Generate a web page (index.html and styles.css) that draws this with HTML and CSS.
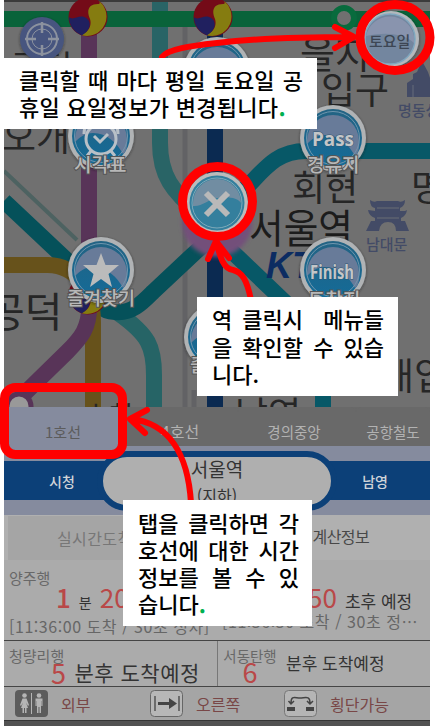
FILE: index.html
```html
<!DOCTYPE html>
<html lang="ko">
<head>
<meta charset="utf-8">
<title>지하철 노선 안내</title>
<link rel="stylesheet" href="styles.css">
</head>
<body>
<div class="screen">
  <svg class="map" viewBox="4 0 426 407" width="426" height="407">
    <defs>
      <linearGradient id="blue" x1="0" y1="0" x2="0" y2="1"><stop offset="0" stop-color="#236383"/><stop offset="1" stop-color="#146b98"/></linearGradient>
      <filter id="soft" x="-30%" y="-30%" width="160%" height="160%"><feDropShadow dx="0" dy="1" stdDeviation="1.5" flood-color="#222" flood-opacity=".6"/></filter>
      <filter id="glow" x="-40%" y="-40%" width="180%" height="180%"><feGaussianBlur stdDeviation="2"/></filter>
      <g id="taegeuk">
        <circle r="19.500" fill="#740b18"/>
        <path d="M9 -17.300A19.500 19.500 0 0 1 -7 18C1 15 4 8 2 2C-2 -7 1 -13 10 -13C12 -13 13 -15 9 -17.300Z" fill="#857c10"/>
        <path d="M-19 0C-15 4 -10 -2 -4 0C3 2 5 12 -6 18.300A19.500 19.500 0 0 1 -19 0Z" fill="#20205f"/>
      </g>
      <g id="button">
        <circle r="33" fill="#b0b3b5" filter="url(#soft)"/>
        <circle r="29" fill="url(#blue)"/>
        <path d="M-26 3A26 26 0 0 1 26 3C27 9 25 16 22 18C16 7 6-3-8-3C-16-3-21 1-26 6Z" fill="#687b99"/>
        <circle r="26.5" fill="none" stroke="#7096ae" stroke-width="1"/>
      </g>
    </defs>
    <rect x="4" width="426" height="407" fill="#707070"/>
    <g fill="none">
      <path d="M185 20V407M194 390V407" stroke="#626265" stroke-width="5"/>
      <path d="M4 171L77 240" stroke="#4d6261" stroke-width="4"/>
      <path d="M160 0V143C160 175 172 192 200 214" stroke="#296466" stroke-width="16"/>
      <path d="M118 313C149 335 154 347 154 375V407" stroke="#266466" stroke-width="16"/>
      <path d="M4 201L72 265C93 287 91 311 115 312C132 314 143 302 153 292L202 246" stroke="#05515a" stroke-width="16"/>
      <path d="M4 265H48C78 266 93 291 93 322V407" stroke="#67521b" stroke-width="16"/>
      <path d="M89 20V300C91 328 80 339 67 352L24 394" stroke="#583458" stroke-width="16"/>
      <path d="M430 151H306C278 151 266 167 248 186L222 210M222 242L289 306M323 390V407" stroke="#075867" stroke-width="16"/>
      <path d="M215 20V407" stroke="#0b2a51" stroke-width="16"/>
      <path d="M4 19H430" stroke="#09633a" stroke-width="16"/>
      <circle cx="344" cy="18" r="10" stroke="#086b3d" stroke-width="6" fill="#707070"/>
      <path d="M4 1H430" stroke="#3b3b3b" stroke-width="2"/>
    </g>
    <circle cx="19" cy="406" r="12" stroke="#583458" stroke-width="5" fill="#999"/>
    <circle cx="217" cy="222" r="35" fill="#73507a" filter="url(#glow)"/>
    <use href="#taegeuk" x="88" y="17"/><use href="#taegeuk" x="213" y="17"/><use href="#taegeuk" x="88" y="295"/>

    <g class="place">
      <text x="10" y="80" font-size="34">공덕</text>
      <text x="300" y="68" font-size="38">을지</text>
      <text x="321" y="104" font-size="37">입구</text>
      <text x="292" y="201" font-size="36">회현</text>
      <text x="411" y="201" font-size="36">명</text>
      <text class="major" x="249" y="243" font-size="40" textLength="104" lengthAdjust="spacingAndGlyphs">서울역</text>
      <text x="-13" y="327" font-size="41">공덕</text>
      <text x="-32" y="151" font-size="37">애오개</text>
      <text x="380" y="390" font-size="37">대입</text>
      <text x="235" y="428" font-size="36">남영</text>
      <text x="83" y="427" font-size="28">효창</text>
    </g>
    <g fill="#434b66" class="landmark">
      <path d="M407 97V83L413 79V74L417 72L422 61L428 72L430 78V97Z"/>
      <path d="M413 85V97" stroke="#666c7b"/>
      <text x="398" y="116" font-size="15">명동성</text>
      <path d="M370 200Q374 203 377 201H398Q401 203 405 200Q405 206 400 208V211H405L407 210Q406 216 401 218V221H405L409 231H396Q396 222 388 222Q380 222 379 231H366L371 221H375V218Q369 216 368 210L375 211V208Q370 207 370 200Z"/>
      <path d="M377 208H399M377 218H399" stroke="#6b6e75"/>
      <text x="366" y="250" font-size="15">남대문</text>
    </g>
    <text class="ktx" x="266" y="278" font-size="36">KTX</text>

    <circle cx="42" cy="39" r="22" fill="#46557f" filter="url(#soft)"/>
    <g fill="none" stroke="#8c929f" stroke-width="2"><circle cx="42" cy="39" r="15"/><circle cx="42" cy="39" r="10" stroke-width="1"/><path d="M42 22V33M42 45V56M25 39H36M48 39H59" stroke-width="2.5"/></g>

    <use href="#button" x="217" y="70"/><use href="#button" x="217" y="337"/>
    <use href="#button" x="101" y="136"/><use href="#button" x="333" y="138"/>
    <use href="#button" x="101" y="270"/><use href="#button" x="333" y="270"/>
    <g fill="none" stroke="#b8c0c7" stroke-width="3"><circle cx="101" cy="139" r="15"/><path d="M94 136L100 142L108 134M84 134Q84 123 94 122M108 122Q118 123 118 134M91 151L87 156M111 151L115 156"/></g>
    <path d="M101 253L105.5 265H119L108.500 274L112 287L101 279L90 287L93.500 274L83 265H96.500Z" fill="#bbb"/>
    <g class="button-word"><text x="312" y="146" font-size="20" textLength="42" lengthAdjust="spacingAndGlyphs">Pass</text><text x="310" y="279" font-size="19" textLength="44" lengthAdjust="spacingAndGlyphs">Finish</text></g>
    <g class="caption">
      <text x="74" y="172" font-size="19">시각표</text>
      <text x="307" y="172" font-size="19">경유지</text>
      <text x="67" y="305" font-size="18.500">즐겨찾기</text>
      <text x="308" y="307" font-size="19">도착지</text>
      <text x="190" y="372" font-size="19">출발지</text>
    </g>
    <circle cx="217" cy="203" r="31" fill="#bbb"/><circle cx="217" cy="203" r="27.500" fill="#347f9d"/>
    <path d="M193 203A24 24 0 0 1 241 203C238 198 228 196 218 198C208 199 202 207 193 206Z" fill="#718da2"/>
    <circle cx="217" cy="203" r="25" fill="none" stroke="#7eaaba"/>
    <path d="M206 193L228 215M228 193L206 215" stroke="#b9b9b9" stroke-width="6"/>
    <circle cx="391" cy="39" r="28" fill="#b4b8bd" filter="url(#soft)"/><circle cx="390" cy="39" r="25" fill="#73869f"/>
    <path d="M366 36A24.500 24.500 0 0 1 414 36V43C406 35 390 31 366 36Z" fill="#8994ae"/><circle cx="390" cy="39" r="25" fill="none" stroke="#7fa7bf" stroke-width="1.500"/>
    <text class="weekday" x="369" y="47" font-size="15">토요일</text>
  </svg>

  <nav class="lines"><span class="line active">1호선</span><span class="line">4호선</span><span class="line">경의중앙</span><span class="line">공항철도</span></nav>
  <header class="station">
    <div class="track"><span>시청</span><span>남영</span></div>
    <div class="current"><b>서울역</b><span>(지하)</span></div>
  </header>
  <nav class="modes"><span class="mode">실시간도착</span><span class="mode selected">계산정보</span></nav>
  <section class="arrivals">
    <article class="arrival">
      <span class="bound">양주행</span>
      <p class="eta"><em>1</em><small>분</small><em>20</em></p>
      <p class="detail">[11:36:00 도착 / 30초 정차]</p>
    </article>
    <article class="arrival right">
      <p class="eta"><em>50</em><span>초후 예정</span></p>
      <p class="detail">[11:36:30 도착 / 30초 정⋯</p>
    </article>
  </section>
  <section class="next">
    <article class="following"><span class="bound">청량리행</span><p><em>5</em><span>분후 도착예정</span></p></article>
    <article class="following second"><div><span class="bound">서동탄행</span><em>6</em></div><span class="due">분후 도착예정</span></article>
  </section>
  <footer class="facilities">
    <div class="facility"><svg width="33" height="27" viewBox="0 0 33 27"><rect width="33" height="27" rx="4" fill="#5c5c5c"/><g fill="#b5b5b5"><circle cx="9.500" cy="5.500" r="2.300"/><path d="M7.500 8.500H11.500L14 15L13 16L11 12.500L13 18H11.500V23H10V18H9V23H7.500V18H6L8 12.500L6 16L5 15Z"/><rect x="16" y="3" width="1" height="21"/><circle cx="24" cy="5.500" r="2.300"/><path d="M20.500 8.500H27.500V16H26.300V11H26V23H24.500V17H23.500V23H22V11H21.700V16H20.500Z"/></g></svg><span>외부</span></div>
    <div class="facility"><svg width="33" height="27" viewBox="0 0 33 27"><rect x=".5" y=".5" width="32" height="26" rx="4" fill="#b7b7b7" stroke="#666"/><path d="M5 6V21M29 6V21" stroke="#444" stroke-width="1.300"/><path d="M8 12H19V8L27 13.500L19 19V15H8Z" fill="#444"/></svg><span>오른쪽</span></div>
    <div class="facility"><svg width="33" height="27" viewBox="0 0 33 27"><rect x=".5" y=".5" width="32" height="26" rx="4" fill="#b5b5b5" stroke="#777"/><path d="M7 13C7 5 11 8 16 8S26 5 26 13M4.500 11L7 14L10 11M23 11L26 14L29 11" fill="none" stroke="#444" stroke-width="1.500"/><path d="M3 17H11V21H3ZM22 17H30V21H22Z" fill="#444"/></svg><span>횡단가능</span></div>
  </footer>
  <div class="edge"></div>
</div>

<svg class="marks" viewBox="0 0 435 726" width="435" height="726">
  <g fill="none" stroke="#f00" stroke-linecap="round" stroke-linejoin="round">
    <ellipse cx="395" cy="37.500" rx="35" ry="33" stroke-width="9"/>
    <circle cx="217.500" cy="201.500" r="35" stroke-width="9"/>
    <rect x="4.500" y="387.500" width="118" height="67" rx="11" stroke-width="9"/>
    <path d="M162 57C168 49 190 46 217 43C260 38 320 37 353 37M335 27L354 37L335 48" stroke-width="6"/>
    <path d="M251 300C247 280 242 272 233 270C223 269 220 256 216 241M208 259L216 241L229 258" stroke-width="6"/>
    <path d="M191 503C188 454 169 423 131 419M147 410L130 419L145 433" stroke-width="6"/>
  </g>
</svg>
<div class="note weekday-note"><p>클릭할 때 마다 평일 토요일 공</p><p class="last">휴일 요일정보가 변경됩니다<i>.</i></p></div>
<div class="note menu-note"><p>역 클릭시 &nbsp;메뉴들</p><p>을 확인할 수 있습</p><p class="last">니다.</p></div>
<div class="note tab-note"><p>탭을 클릭하면 각</p><p>호선에 대한 시간</p><p>정보를 볼 수 있</p><p class="last">습니다<i>.</i></p></div>
</body>
</html>
```
FILE: styles.css
```css
* { box-sizing: border-box; }
body { margin: 0; width: 435px; height: 726px; overflow: hidden; position: relative; background: #fff; font-family: "Noto Sans CJK KR", sans-serif; }
p { margin: 0; }
.screen { width: 426px; height: 726px; margin-left: 4px; overflow: hidden; display: flex; flex-direction: column; background: #ababab; }
.map { display: block; flex: none; }
.place { fill: #262626; font-weight: 400; }
.major { fill: #1c1c1c; font-weight: 400; }
.landmark { font-weight: 500; }
.ktx { fill: #0c2c62; font-family: "Liberation Sans", sans-serif; font-weight: 700; font-style: italic; }
.button-word { fill: #c3c6c8; stroke: #315773; stroke-width: 1px; paint-order: stroke; font-family: "Open Sans", sans-serif; font-weight: 700; }
.caption { fill: #b8b8b8; stroke: #555; stroke-width: 2px; paint-order: stroke; font-weight: 500; }
.weekday { fill: #3d4654; font-weight: 500; }

.lines { display: grid; grid-template-columns: 118px 116px 118px 74px; height: 39px; flex: none; background: #696969; color: #b2b2b2; font-size: 16px; line-height: 49px; }
.line { text-align: center; border-radius: 5px 5px 0 0; white-space: nowrap; background: #696969; }
.line:nth-child(3) { font-size: 14.5px; padding-right: 6px; }
.line:last-child { font-size: 14.5px; }
.line.active { background: #858b9e; color: #5c5c5c; font-size: 15px; }

.station { height: 69px; flex: none; display: grid; align-items: center; justify-items: center; background: #858b9e; }
.station > * { grid-area: 1 / 1; }
.track { width: 100%; height: 39px; display: flex; justify-content: space-between; align-items: center; padding: 0 42px 0 45px; background: #0c4078; color: #d0d4d8; font-size: 14px; font-weight: 500; }
.current { width: 240px; height: 60px; border: 6px solid #0c4078; border-radius: 30px; background: #afafaf; display: flex; flex-direction: column; align-items: center; color: #333; font-size: 16px; line-height: 30px; overflow: hidden; }
.current b { font-size: 19px; font-weight: 400; line-height: 23px; }

.modes { height: 45px; flex: none; display: flex; padding: 1px 5px 0 4px; background: #b0b0b0; color: #777; font-size: 16px; line-height: 45px; }
.mode { width: 209px; padding-left: 49px; background: #a5a5a5; letter-spacing: .4px; white-space: nowrap; }
.mode.selected { background: #b0b0b0; color: #484848; padding-left: 96px; letter-spacing: -.5px; line-height: 41px; }

.arrivals, .next { display: grid; grid-template-columns: 213px 213px; flex: none; border-bottom: 1px solid #454545; background: #ababab; }
.arrivals { height: 81px; }
.bound { display: block; color: #686868; font-size: 15px; line-height: 17px; }
em { color: #b94848; font-style: normal; font-weight: 400; }
.arrival { padding: 9px 0 0 5px; white-space: nowrap; }
.eta { display: flex; align-items: baseline; height: 28px; line-height: 22px; padding-left: 47px; gap: 8px; color: #333; }
.eta em { font-size: 26px; }
.eta em:first-child { font-weight: 500; }
.eta small { font-size: 14px; }
.eta span { font-size: 17px; }
.right .eta { padding-left: 86px; margin-top: 17px; height: 24px; }
.right .eta em { font-weight: 400; }
.detail { color: #666; font-size: 16px; line-height: 25px; letter-spacing: .55px; }
.right .detail { line-height: 22px; }
.next { height: 46px; }
.following { padding: 6px 0 0 5px; color: #333; white-space: nowrap; }
.following p { display: flex; align-items: center; gap: 8px; padding-left: 42px; height: 16px; font-size: 21px; letter-spacing: .5px; }
.following em { font-size: 27px; }
.second { display: flex; gap: 9px; border-left: 1px solid #777; }
.second div { width: 54px; text-align: center; }
.second .bound { font-size: 14.5px; }
.second em { display: block; line-height: 16px; }
.due { font-size: 17px; line-height: 31px; }
.facilities { height: 33px; flex: none; display: grid; grid-template-columns: 135px 134px 1fr; padding-left: 11px; background: #a5a5a5; color: #794747; font-size: 16px; }
.facility { display: flex; align-items: center; gap: 13px; white-space: nowrap; }
.edge { height: 6px; flex: none; background: #525252; border-top: 1px solid #353535; }

.marks { position: absolute; left: 0; top: 0; }
.note { position: absolute; background: #fff; color: #000; font-size: 22px; font-weight: 500; white-space: nowrap; }
.note p { text-align-last: justify; }
.note .last { text-align-last: left; }
.note i { color: #00b050; font-style: normal; font-weight: 700; }
.weekday-note { left: 4px; top: 58px; width: 313px; height: 71px; padding: 8px 14px 0 15px; line-height: 27px; }
.weekday-note .last { letter-spacing: .3px; }
.menu-note { left: 197px; top: 297px; width: 201px; height: 99px; padding: 8px 14px 0 15px; line-height: 27.5px; }
.tab-note { left: 123px; top: 500px; width: 189px; height: 126px; padding: 9px 13px 0 15px; line-height: 27px; }
```
